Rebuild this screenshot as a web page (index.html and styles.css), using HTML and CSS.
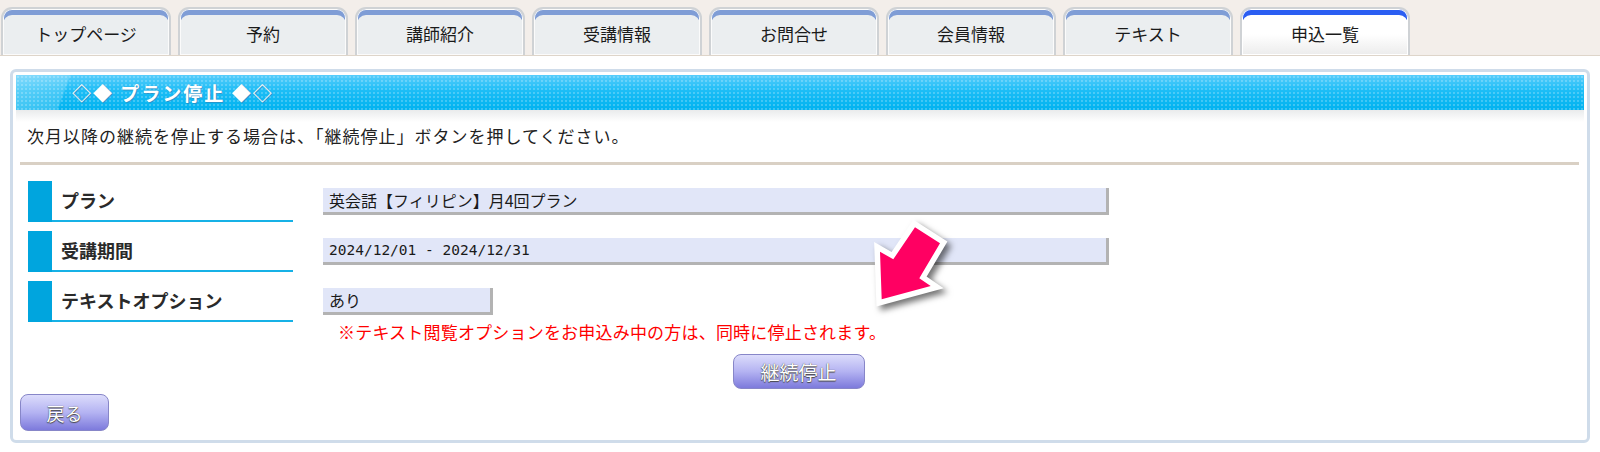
FILE: index.html
```html
<!DOCTYPE html>
<html lang="ja">
<head>
    <meta charset="UTF-8">
    <title>プラン停止</title>
    <link rel="stylesheet" href="styles.css">
</head>
<body>
    <div class="page">
        <div class="tabbar">
            <div class="tab">トップページ</div>
            <div class="tab">予約</div>
            <div class="tab">講師紹介</div>
            <div class="tab">受講情報</div>
            <div class="tab">お問合せ</div>
            <div class="tab">会員情報</div>
            <div class="tab">テキスト</div>
            <div class="tab active">申込一覧</div>
        </div>

        <div class="panel">
            <div class="panel-header">◇◆ プラン停止 ◆◇</div>
            <div class="panel-body">
                <p class="intro">次月以降の継続を停止する場合は、「継続停止」ボタンを押してください。</p>
                <div class="divider"></div>

                <div class="rows">
                    <div class="row">
                        <div class="label"><span class="mark"></span><span class="label-text">プラン</span></div>
                        <div class="field wide">英会話【フィリピン】月4回プラン</div>
                    </div>
                    <div class="row">
                        <div class="label"><span class="mark"></span><span class="label-text">受講期間</span></div>
                        <div class="field wide mono">2024/12/01 - 2024/12/31</div>
                    </div>
                    <div class="row">
                        <div class="label"><span class="mark"></span><span class="label-text">テキストオプション</span></div>
                        <div class="field short">あり</div>
                    </div>
                    <p class="note">※テキスト閲覧オプションをお申込み中の方は、同時に停止されます。</p>
                </div>

                <div class="actions">
                    <button class="btn btn-stop">継続停止</button>
                </div>
                <button class="btn btn-back">戻る</button>
            </div>
        </div>

        <!-- pointer arrow over the form -->
        <svg class="arrow" width="110" height="120" viewBox="0 0 110 120">
            <polygon points="21.7,99.3 20,51.7 33.3,59.3 55,27.3 80,43.3 59.3,78.3 70.7,86"
                     fill="#ff0062" stroke="#fff" stroke-width="11" stroke-linejoin="miter"
                     stroke-miterlimit="3" paint-order="stroke"/>
        </svg>
    </div>
</body>
</html>
```

FILE: styles.css
```css
* {
    box-sizing: border-box;
    margin: 0;
    padding: 0;
}

body {
    font-family: "Noto Sans CJK JP", "Noto Sans", sans-serif;
    background: #fff;
    color: #222;
}

.page {
    position: relative;
    width: 1600px;
    height: 452px;
    overflow: hidden;
}

/* tabs */
.tabbar {
    display: flex;
    align-items: flex-end;
    gap: 7px;
    height: 56px;
    padding: 7px 0 0 1px;
    background: #f3eeea;
    border-bottom: 1px solid #ded5ca;
}

.tab {
    width: 170px;
    height: 48px;
    padding-top: 5px;
    border: 2px solid #cfd2d5;
    border-bottom: none;
    border-radius: 11px 11px 0 0;
    background: #ebeef0;
    box-shadow: inset 0 0 0 1px #fbfbfb, inset 0 6px 0 #7f9dd6;
    font-size: 17px;
    line-height: 40px;
    text-align: center;
    color: #1a1a1a;
}

.tab.active {
    background: linear-gradient(#fff 55%, #ececec);
    box-shadow: inset 0 0 0 1px #fff, inset 0 6px 0 #2b5ef2;
}

/* panel */
.panel {
    margin: 13px 10px 0;
    height: 374px;
    padding: 3px;
    border: 3px solid #cfdcea;
    border-radius: 6px;
    display: flex;
    flex-direction: column;
}

.panel-header {
    height: 35px;
    padding-left: 56px;
    background:
        radial-gradient(rgba(255,255,255,0.22) 0.8px, transparent 1.3px) 0 0 / 4px 4px,
        linear-gradient(110deg, rgba(255,255,255,0.28) 0, rgba(255,255,255,0.18) 50px, rgba(255,255,255,0) 52px),
        linear-gradient(#58cdfb, #1cbdf6 45%, #00b2ef);
    color: #fff;
    font-size: 19px;
    font-weight: bold;
    line-height: 35px;
    letter-spacing: 2px;
    text-shadow: 0 0 1px #3a8fc0, 1px 1px 0 rgba(60,120,170,0.5);
}

.panel-body {
    flex: 1;
    padding: 0 3px 5px 0;
    background: linear-gradient(#e9ebec, #fff 12px);
    display: flex;
    flex-direction: column;
}

.intro {
    padding: 14px 0 0 11px;
    font-size: 17px;
    line-height: 24px;
    letter-spacing: 1px;
    height: 52px;
}

.divider {
    height: 3px;
    margin: 0 2px 0 4px;
    background: #d9d0c4;
}

.rows {
    padding: 16px 0 0 12px;
    display: flex;
    flex-direction: column;
    gap: 9px;
}

.row {
    display: flex;
    align-items: center;
    gap: 30px;
}

.label {
    display: flex;
    height: 41px;
}

.mark {
    width: 24px;
    background: #00a5de;
}

.label-text {
    width: 241px;
    padding-left: 9px;
    border-bottom: 2px solid #16b1e6;
    font-size: 18px;
    font-weight: bold;
    line-height: 38px;
    color: #2a2a2a;
}

.field {
    height: 27px;
    padding-left: 6px;
    background: #e1e6f8;
    border-right: 3px solid #b3b3b3;
    border-bottom: 3px solid #b3b3b3;
    font-size: 16px;
    line-height: 24px;
    color: #1a1a1a;
}

.field.wide {
    width: 786px;
}

.field.short {
    width: 170px;
}

.field.mono {
    font-family: "DejaVu Sans Mono", monospace;
    font-size: 14.5px;
}

.note {
    margin: -9px 0 0 310px;
    color: #ff0000;
    font-size: 17px;
    line-height: 20px;
    letter-spacing: 0.2px;
}

.actions {
    margin-top: 12px;
    text-align: center;
}

.btn {
    border: 1px solid #8786c8;
    border-radius: 8px;
    background: linear-gradient(#dcdcfb, #b4b3f2 50%, #7d7adc);
    color: #fff;
    font-family: inherit;
    font-size: 19px;
    text-shadow: 0 1px 1px #444, 0 0 1px #444;
    cursor: pointer;
}

.btn-stop {
    width: 132px;
    height: 35px;
    line-height: 32px;
}

.btn-back {
    align-self: flex-start;
    margin: 5px 0 0 4px;
    width: 89px;
    height: 37px;
    font-size: 18px;
    line-height: 34px;
}

.arrow {
    position: absolute;
    left: 860px;
    top: 200px;
    filter: drop-shadow(4px 4px 3px rgba(0,0,0,0.55));
}
```
